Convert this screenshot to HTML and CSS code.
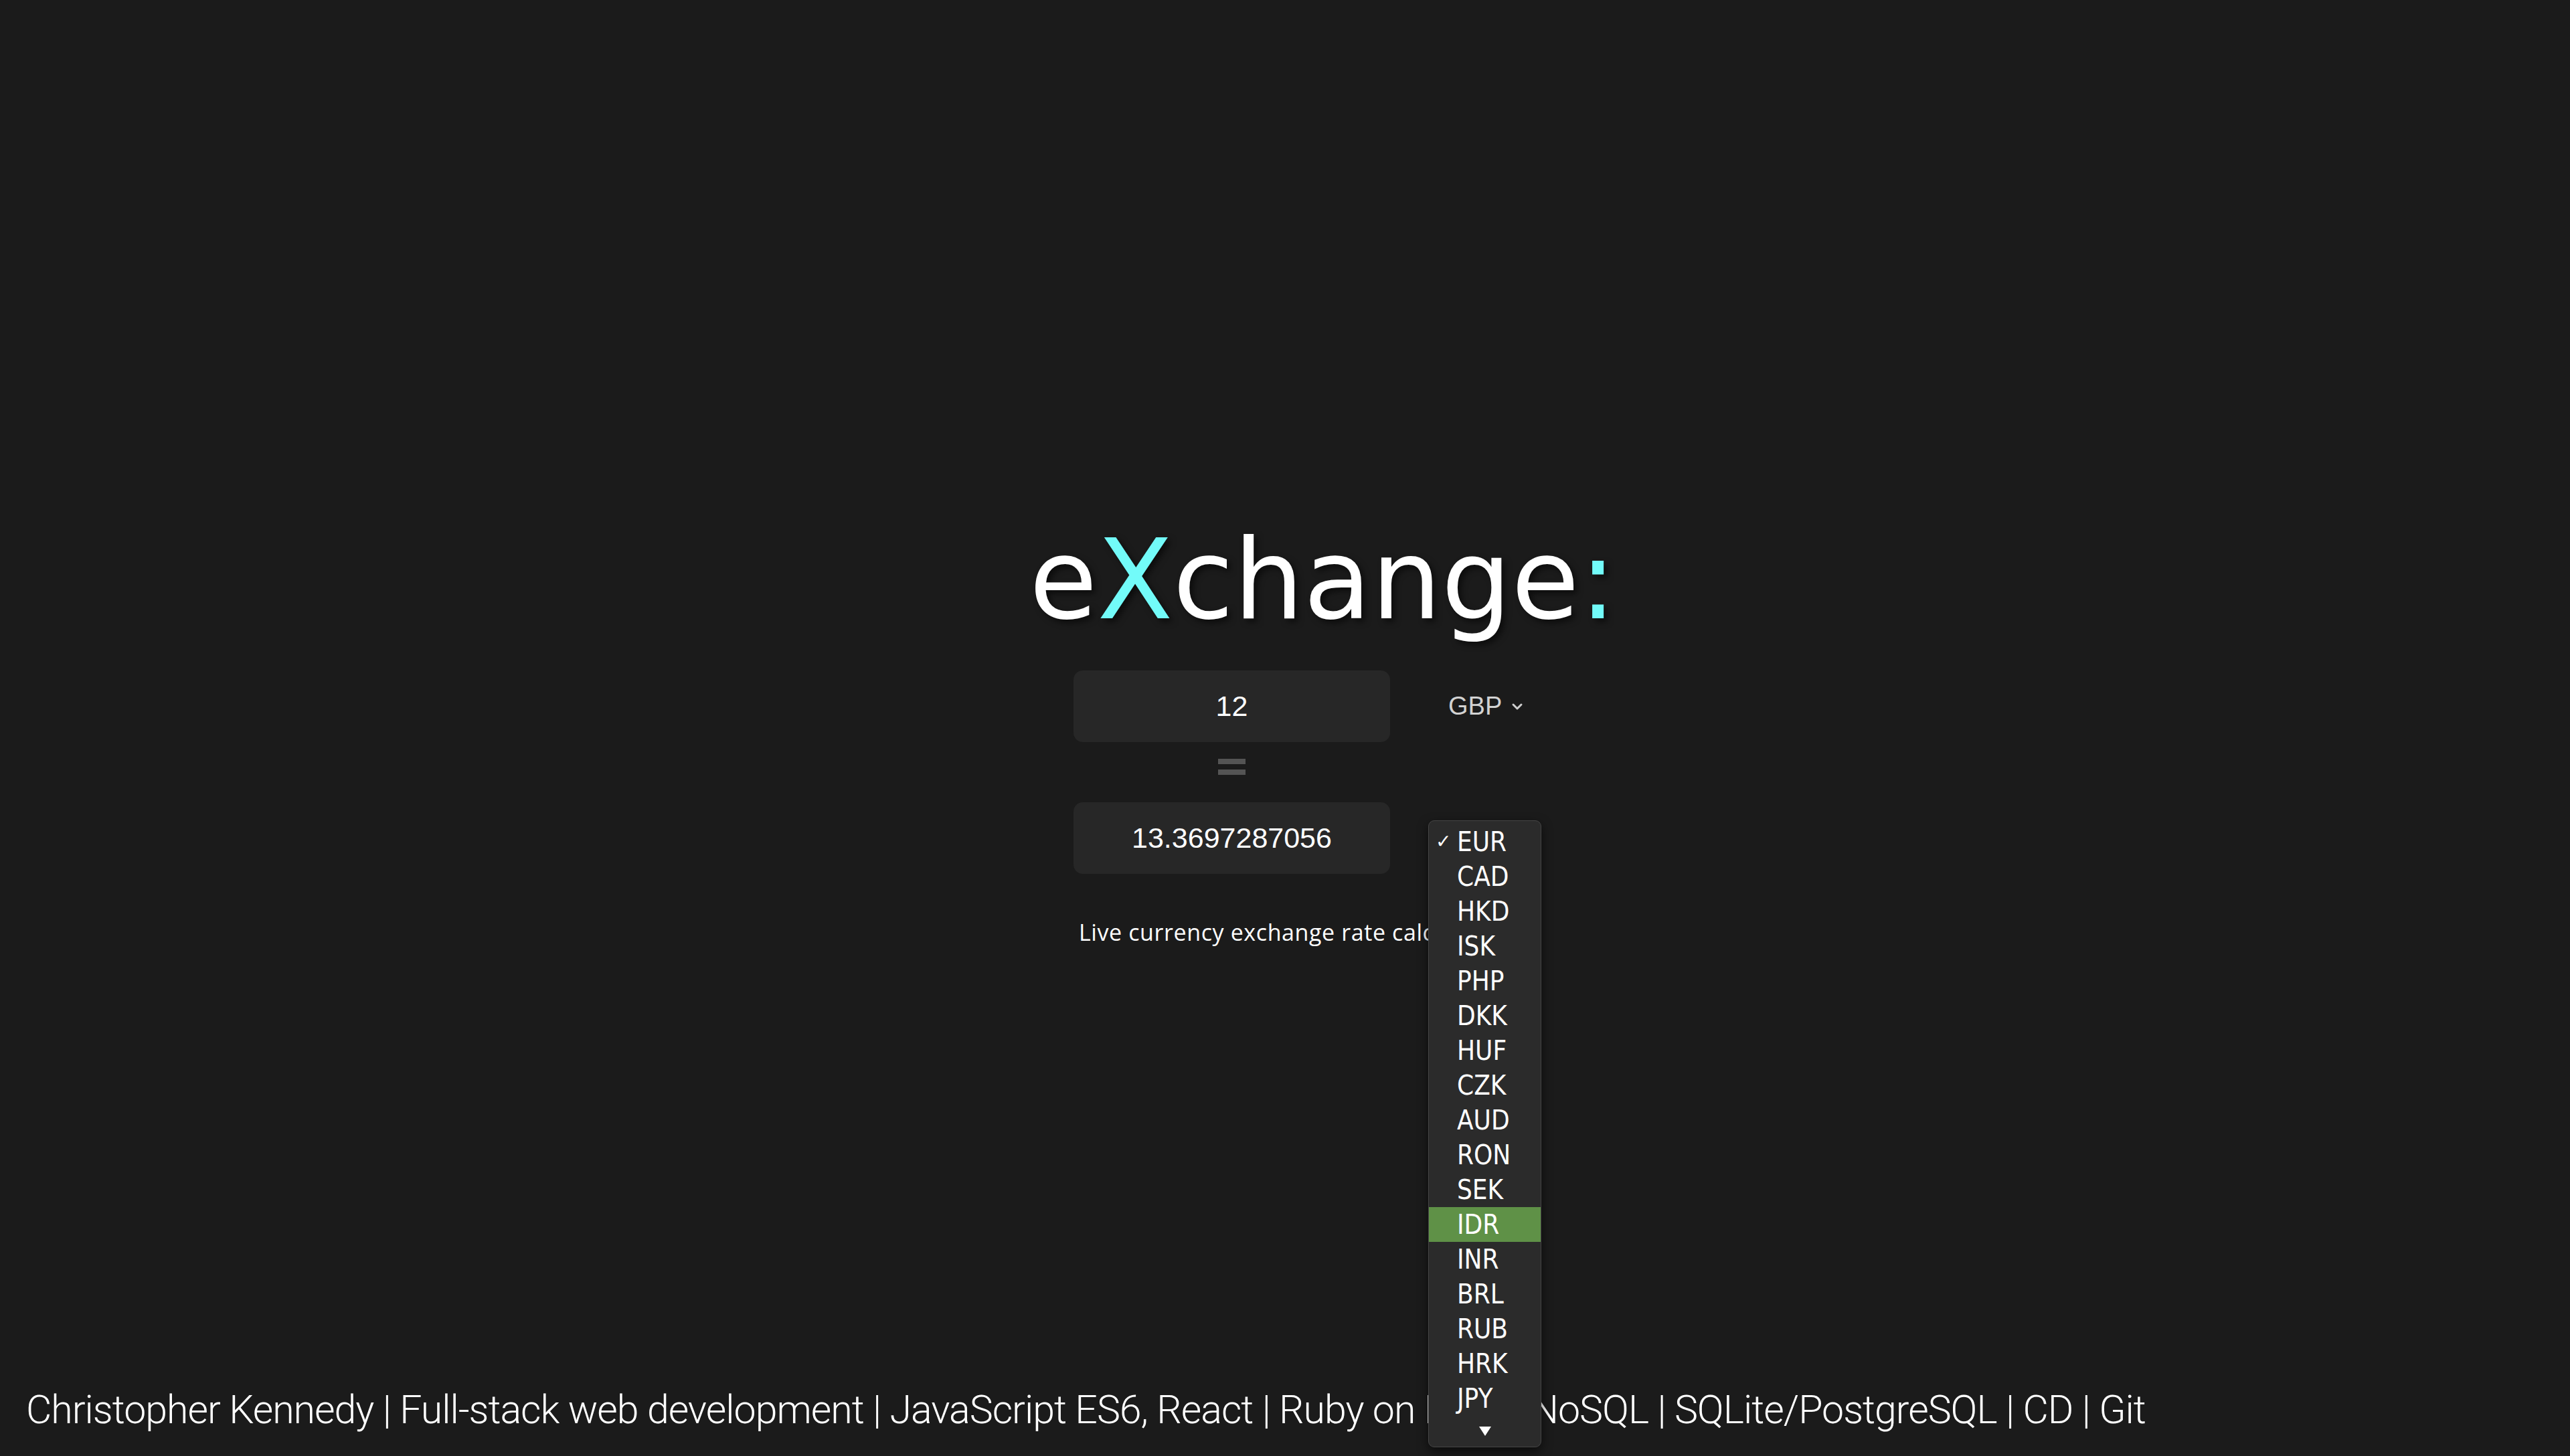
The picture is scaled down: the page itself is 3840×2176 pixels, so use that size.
FILE: index.html
```html
<!DOCTYPE html>
<html lang="en">
<head>
<meta charset="utf-8">
<title>eXchange</title>
<link rel="stylesheet" href="styles.css">
</head>
<body>
<main class="main">
  <div class="app">
    <h1 class="logo">e<span class="accent">X</span>change<span class="accent">:</span></h1>
    <div class="row">
      <div class="field">12</div>
      <div class="currency">GBP <svg class="chev" width="18" height="12" viewBox="0 0 18 12"><path d="M3 3 L9 9 L15 3" fill="none" stroke="#cfcfcf" stroke-width="3" stroke-linecap="round" stroke-linejoin="round"/></svg></div>
    </div>
    <div class="equals"><span class="bar"></span><span class="bar"></span></div>
    <div class="row">
      <div class="field">13.3697287056</div>
      <div class="currency">EUR <svg class="chev" width="18" height="12" viewBox="0 0 18 12"><path d="M3 3 L9 9 L15 3" fill="none" stroke="#cfcfcf" stroke-width="3" stroke-linecap="round" stroke-linejoin="round"/></svg></div>
    </div>
    <p class="tagline">Live currency exchange rate calculator</p>
  </div>
</main>
<footer class="footer">Christopher Kennedy | Full-stack web development | JavaScript ES6, React | Ruby on Rails | NoSQL | SQLite/PostgreSQL | CD | Git</footer>

<ul class="menu">
  <li class="item"><span class="check">✓</span>EUR</li>
  <li class="item">CAD</li>
  <li class="item">HKD</li>
  <li class="item">ISK</li>
  <li class="item">PHP</li>
  <li class="item">DKK</li>
  <li class="item">HUF</li>
  <li class="item">CZK</li>
  <li class="item">AUD</li>
  <li class="item">RON</li>
  <li class="item">SEK</li>
  <li class="item active">IDR</li>
  <li class="item">INR</li>
  <li class="item">BRL</li>
  <li class="item">RUB</li>
  <li class="item">HRK</li>
  <li class="item">JPY</li>
  <li class="more"><svg width="20" height="16" viewBox="0 0 20 16"><path d="M1 1 H19 L10 15 Z" fill="#ffffff"/></svg></li>
</ul>
</body>
</html>
```

FILE: styles.css
```css
html, body {
  margin: 0;
  padding: 0;
}

body {
  background: #1b1b1b;
  color: #ffffff;
  height: 2176px;
  display: flex;
  flex-direction: column;
  font-family: "Liberation Sans", Arial, sans-serif;
  position: relative;
  overflow: hidden;
}

.main {
  flex: 1;
  display: flex;
  justify-content: center;
  padding-left: 110px;
  padding-top: 785px;
}

.app {
  width: 874px;
  display: flex;
  flex-direction: column;
}

.logo {
  margin: 0;
  font-family: "DejaVu Sans", sans-serif;
  font-weight: 400;
  font-size: 165px;
  line-height: 1;
  letter-spacing: 0;
  text-align: center;
  color: #ffffff;
  text-shadow: 5px 5px 10px rgba(0, 0, 0, 0.55);
  height: 165px;
  white-space: nowrap;
}

.accent {
  color: #72fbf9;
}

.row {
  display: flex;
  align-items: center;
  margin-left: 66px;
}

.row:first-of-type {
  margin-top: 52px;
}

.field {
  width: 473px;
  height: 107px;
  border-radius: 14px;
  background: #272727;
  display: flex;
  align-items: center;
  justify-content: center;
  font-size: 43px;
  color: #ffffff;
}

.currency {
  margin-left: 87px;
  font-size: 38px;
  color: #d2d2d2;
  display: flex;
  align-items: center;
  gap: 14px;
}

.equals {
  width: 473px;
  margin-left: 66px;
  margin-top: 25px;
  margin-bottom: 41px;
  display: flex;
  flex-direction: column;
  align-items: center;
  gap: 8px;
}

.bar {
  display: block;
  width: 41px;
  height: 8px;
  background: #545454;
}

.tagline {
  margin: 70px 0 0 74px;
  font-family: "Open Sans", sans-serif;
  font-size: 34px;
  letter-spacing: 0.6px;
  line-height: 1;
  color: #ffffff;
  white-space: nowrap;
}

.footer {
  padding: 0 0 40px 39px;
  font-family: Roboto, sans-serif;
  font-weight: 300;
  font-size: 59px;
  letter-spacing: -1px;
  line-height: 1;
  color: #ffffff;
  white-space: nowrap;
}

.menu {
  position: absolute;
  left: 2134px;
  top: 1226px;
  width: 169px;
  height: 937px;
  box-sizing: border-box;
  margin: 0;
  padding: 5px 0 0;
  list-style: none;
  background: #2b2b2b;
  border: 1px solid #464646;
  border-radius: 9px;
  box-shadow: 0 6px 16px rgba(0, 0, 0, 0.6);
}

.item {
  position: relative;
  height: 52px;
  line-height: 52px;
  padding-left: 42px;
  font-family: "Liberation Sans Narrow", "DejaVu Sans Condensed", sans-serif;
  font-size: 40px;
  color: #ffffff;
}

.item.active {
  background: #5f9147;
}

.check {
  position: absolute;
  left: 10px;
  top: 0;
  font-family: "DejaVu Sans", sans-serif;
  font-size: 28px;
}

.more {
  height: 46px;
  display: flex;
  align-items: center;
  justify-content: center;
}
```
